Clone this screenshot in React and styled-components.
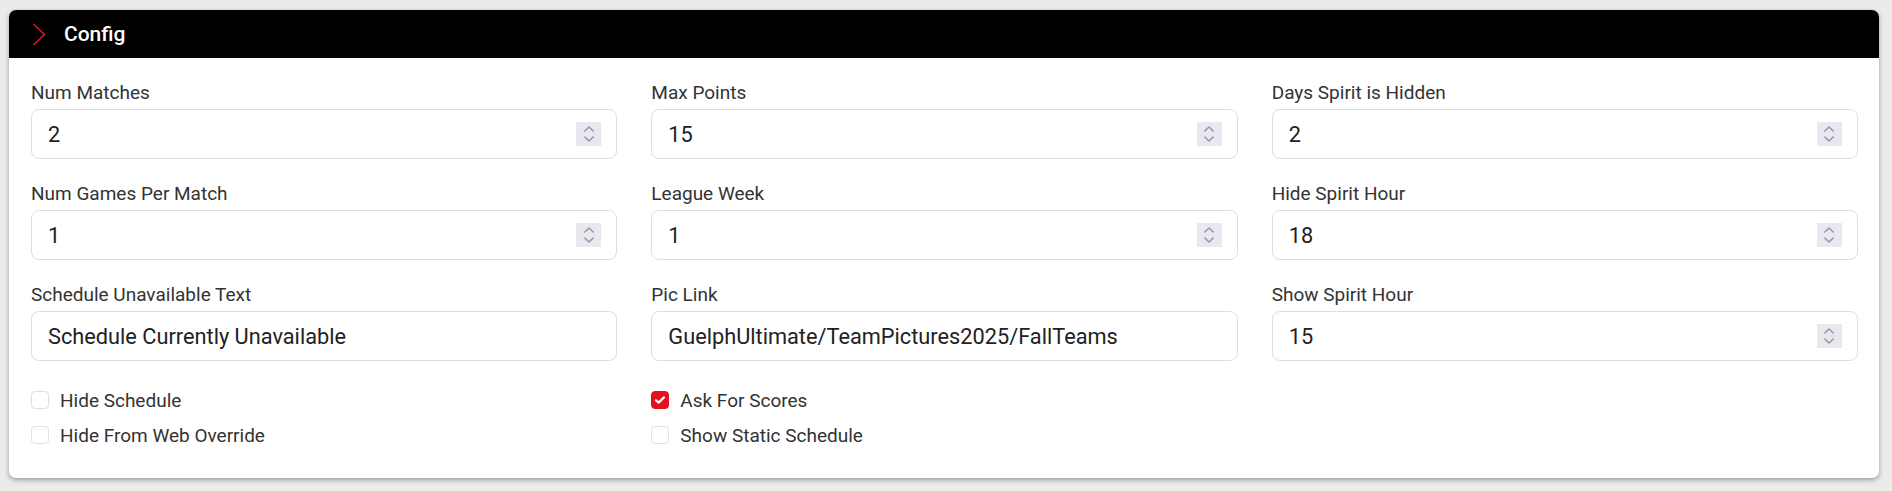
import React from 'react'
import styled, { createGlobalStyle } from 'styled-components'

const GlobalStyle = createGlobalStyle`
  html, body {
    margin: 0;
    padding: 0;
    background: #ebebe9;
    font-family: Roboto, "Liberation Sans", sans-serif;
  }
  * { box-sizing: border-box; }
`

const Page = styled.div`
  padding: 10px 13px 14px 9px;
`

const Card = styled.section`
  background: #fff;
  border-radius: 7px;
  box-shadow: 0 2px 5px rgba(0, 0, 0, 0.35);
  overflow: hidden;
`

const Header = styled.header`
  height: 48px;
  background: #000;
  display: flex;
  align-items: center;
  gap: 18px;
  padding-left: 23px;
  color: #fff;
  font-size: 21px;
  font-weight: 500;
`

const Body = styled.div`
  padding: 24px 21px 30px 22px;
`

const Grid = styled.div`
  display: grid;
  grid-template-columns: repeat(3, 1fr);
  column-gap: 34px;
  row-gap: 24px;
`

const Field = styled.div`
  display: flex;
  flex-direction: column;
`

const Label = styled.label`
  font-size: 19px;
  line-height: 22px;
  color: #333;
  margin-bottom: 5px;
`

const InputBox = styled.div`
  height: 50px;
  border: 1px solid #dedde3;
  border-radius: 8px;
  display: flex;
  align-items: center;
  padding: 0 15px 0 16px;
`

const Input = styled.input`
  flex: 1;
  min-width: 0;
  border: none;
  outline: none;
  padding: 0;
  font-family: inherit;
  font-size: 21.75px;
  color: #222;
  background: transparent;
`

const Spinner = styled.span`
  width: 25px;
  height: 24px;
  background: #e9e8ee;
  display: flex;
  align-items: center;
  justify-content: center;
`

const Checks = styled.div`
  display: grid;
  grid-template-columns: repeat(3, 1fr);
  column-gap: 34px;
  margin-top: 26px;
`

const CheckCol = styled.div`
  display: flex;
  flex-direction: column;
  gap: 9px;
`

const CheckRow = styled.label`
  display: flex;
  align-items: center;
  gap: 11px;
  height: 26px;
  font-size: 19px;
  color: #333;
`

const Box = styled.span`
  width: 18px;
  height: 18px;
  border-radius: 4px;
  border: 1px solid ${(p) => (p.$checked ? '#e0121d' : '#e2e1e6')};
  background: ${(p) => (p.$checked ? '#e0121d' : '#fff')};
  display: flex;
  align-items: center;
  justify-content: center;
`

const SpinIcon = () => (
  <svg width="12" height="20" viewBox="0 0 12 20" fill="none" stroke="#9594a3" strokeWidth="1.5" strokeLinecap="round" strokeLinejoin="round">
    <path d="M1.8 7 L6 3 L10.2 7" />
    <path d="M1.8 13 L6 17 L10.2 13" />
  </svg>
)

const NumberField = ({ label, value, number }) => (
  <Field>
    <Label>{label}</Label>
    <InputBox>
      <Input defaultValue={value} />
      {number && (
        <Spinner>
          <SpinIcon />
        </Spinner>
      )}
    </InputBox>
  </Field>
)

const Check = ({ label, checked }) => (
  <CheckRow>
    <Box $checked={checked}>
      {checked && (
        <svg width="12" height="10" viewBox="0 0 12 10" fill="none" stroke="#fff" strokeWidth="2.2" strokeLinecap="round" strokeLinejoin="round">
          <path d="M2 5.2 L4.6 7.6 L10 2.4" />
        </svg>
      )}
    </Box>
    {label}
  </CheckRow>
)

const fields = [
  { label: 'Num Matches', value: '2', number: true },
  { label: 'Max Points', value: '15', number: true },
  { label: 'Days Spirit is Hidden', value: '2', number: true },
  { label: 'Num Games Per Match', value: '1', number: true },
  { label: 'League Week', value: '1', number: true },
  { label: 'Hide Spirit Hour', value: '18', number: true },
  { label: 'Schedule Unavailable Text', value: 'Schedule Currently Unavailable' },
  { label: 'Pic Link', value: 'GuelphUltimate/TeamPictures2025/FallTeams' },
  { label: 'Show Spirit Hour', value: '15', number: true },
]

export default function App() {
  return (
    <Page>
      <GlobalStyle />
      <Card>
        <Header>
          <svg width="14" height="23" viewBox="0 0 14 23" fill="none" stroke="#e0121d" strokeWidth="1.6">
            <path d="M1.5 1 L12.5 11.5 L1.5 22" />
          </svg>
          Config
        </Header>
        <Body>
          <Grid>
            {fields.map((f) => (
              <NumberField key={f.label} {...f} />
            ))}
          </Grid>
          <Checks>
            <CheckCol>
              <Check label="Hide Schedule" />
              <Check label="Hide From Web Override" />
            </CheckCol>
            <CheckCol>
              <Check label="Ask For Scores" checked />
              <Check label="Show Static Schedule" />
            </CheckCol>
          </Checks>
        </Body>
      </Card>
    </Page>
  )
}
